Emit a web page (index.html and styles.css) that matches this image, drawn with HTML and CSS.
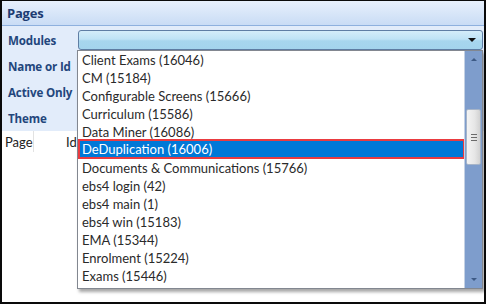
FILE: index.html
```html
<!DOCTYPE html>
<html>
<head>
<meta charset="utf-8">
<link rel="stylesheet" href="styles.css">
</head>
<body>
  <div class="frame">
    <div class="title-bar">Pages</div>
    <div class="filter-panel">
      <div class="filter-row">
        <span class="filter-label">Modules</span>
        <div class="combo">
          <span class="combo-arrow"></span>
        </div>
      </div>
      <div class="filter-row"><span class="filter-label">Name or Id</span></div>
      <div class="filter-row"><span class="filter-label">Active Only</span></div>
      <div class="filter-row"><span class="filter-label">Theme</span></div>
    </div>
    <div class="grid-head">
      <div class="grid-col col-page">Page</div>
      <div class="grid-col col-id">Id</div>
    </div>
    <div class="grid-body"></div>

    <!-- open dropdown of the Modules combo -->
    <div class="combo-list">
      <ul class="combo-items">
        <li>Client Exams (16046)</li>
        <li>CM (15184)</li>
        <li>Configurable Screens (15666)</li>
        <li>Curriculum (15586)</li>
        <li>Data Miner (16086)</li>
        <li class="selected">DeDuplication (16006)</li>
        <li>Documents &amp; Communications (15766)</li>
        <li>ebs4 login (42)</li>
        <li>ebs4 main (1)</li>
        <li>ebs4 win (15183)</li>
        <li>EMA (15344)</li>
        <li>Enrolment (15224)</li>
        <li>Exams (15446)</li>
      </ul>
      <div class="scrollbar">
        <span class="scroll-arrow up"></span>
        <div class="scroll-track">
          <div class="scroll-thumb"><span class="grip"></span></div>
        </div>
        <span class="scroll-arrow down"></span>
      </div>
    </div>
  </div>
</body>
</html>
```
FILE: styles.css
```css
html, body {
  margin: 0;
  padding: 0;
  background: #fff;
}
body {
  font-family: Lato, "Open Sans", sans-serif;
  font-size: 13px;
  color: #222;
}
.frame {
  position: relative;
  width: 486px;
  height: 304px;
  box-sizing: border-box;
  border: 2px solid #0a0a0a;
  border-top-width: 1px;
  display: flex;
  flex-direction: column;
  overflow: hidden;
}
.title-bar {
  height: 25px;
  box-sizing: border-box;
  padding-left: 5px;
  display: flex;
  align-items: center;
  font-family: "Open Sans", sans-serif;
  font-weight: bold;
  font-size: 13px;
  letter-spacing: -0.2px;
  color: #1d3c72;
  background: linear-gradient(#e7f0fc, #c9dcf5);
  border-bottom: 1px solid #8eb0de;
}
.filter-panel {
  background: #e2ecfa;
  padding-top: 1px;
}
.filter-row {
  height: 26px;
  display: flex;
  align-items: center;
}
.filter-label {
  flex: none;
  width: 76px;
  padding-left: 6px;
  box-sizing: border-box;
  white-space: nowrap;
  font-family: "Open Sans", sans-serif;
  font-weight: bold;
  font-size: 11.6px;
  letter-spacing: -0.15px;
  color: #23467c;
}
.combo {
  flex: 1;
  height: 20px;
  margin-right: 1px;
  box-sizing: border-box;
  border: 1px solid #5f7ea4;
  border-radius: 3px;
  background: linear-gradient(#d4edf9 0%, #bfe3f5 45%, #a7d6ee 55%, #a3d4ed 100%);
  display: flex;
  align-items: center;
  justify-content: flex-end;
  padding-right: 6px;
}
.combo-arrow {
  width: 0;
  height: 0;
  border-left: 4px solid transparent;
  border-right: 4px solid transparent;
  border-top: 4px solid #111;
}
.grid-head {
  height: 21px;
  display: flex;
  background: #fff;
  font-size: 13px;
}
.grid-col {
  display: flex;
  align-items: center;
  box-sizing: border-box;
}
.col-page {
  width: 32px;
  padding-left: 3px;
  border-right: 1px solid #e2e2e2;
}
.col-id {
  padding-left: 32px;
}
.grid-body {
  flex: 1;
  background: #fff;
}

/* dropdown list */
.combo-list {
  position: absolute;
  left: 75px;
  top: 49px;
  width: 406px;
  height: 239px;
  box-sizing: border-box;
  border: 1px solid #828790;
  background: #fff;
  box-shadow: 2px 3px 3px rgba(0, 0, 0, 0.35);
  display: flex;
}
.combo-items {
  flex: 1;
  list-style: none;
  margin: 0;
  padding: 0;
}
.combo-items li {
  height: 18px;
  line-height: 18px;
  padding-left: 4px;
  white-space: nowrap;
  color: #2a2a2a;
}
.combo-items li.selected {
  height: 20px;
  line-height: 16px;
  margin-top: -2px;
  margin-right: -1px;
  padding-left: 2px;
  box-sizing: border-box;
  border: 2px solid #ea3b40;
  background: #0078d7;
  color: #fff;
}
.scrollbar {
  width: 17px;
  background: #7e9dcc;
  border-left: 1px solid #c4d1e4;
  display: flex;
  flex-direction: column;
  align-items: center;
}
.scroll-arrow {
  width: 0;
  height: 0;
  margin: 7px 0;
  border-left: 3px solid transparent;
  border-right: 3px solid transparent;
}
.scroll-arrow.up {
  border-bottom: 3px solid #3d5a85;
}
.scroll-arrow.down {
  border-top: 3px solid #3d5a85;
}
.scroll-track {
  flex: 1;
  width: 100%;
  padding-top: 41px;
  box-sizing: border-box;
}
.scroll-thumb {
  height: 56px;
  margin: 0 1px;
  box-sizing: border-box;
  border: 1px solid #a6b4c8;
  border-radius: 2px;
  background: linear-gradient(90deg, #f4f4f4, #e6e6e6 60%, #d2d2d2);
  display: flex;
  align-items: center;
  justify-content: center;
}
.grip {
  width: 6px;
  height: 5px;
  border-top: 1px solid #6b6b6b;
  border-bottom: 1px solid #6b6b6b;
  position: relative;
}
.grip::after {
  content: "";
  position: absolute;
  left: 0;
  right: 0;
  top: 2px;
  border-top: 1px solid #6b6b6b;
}
```
